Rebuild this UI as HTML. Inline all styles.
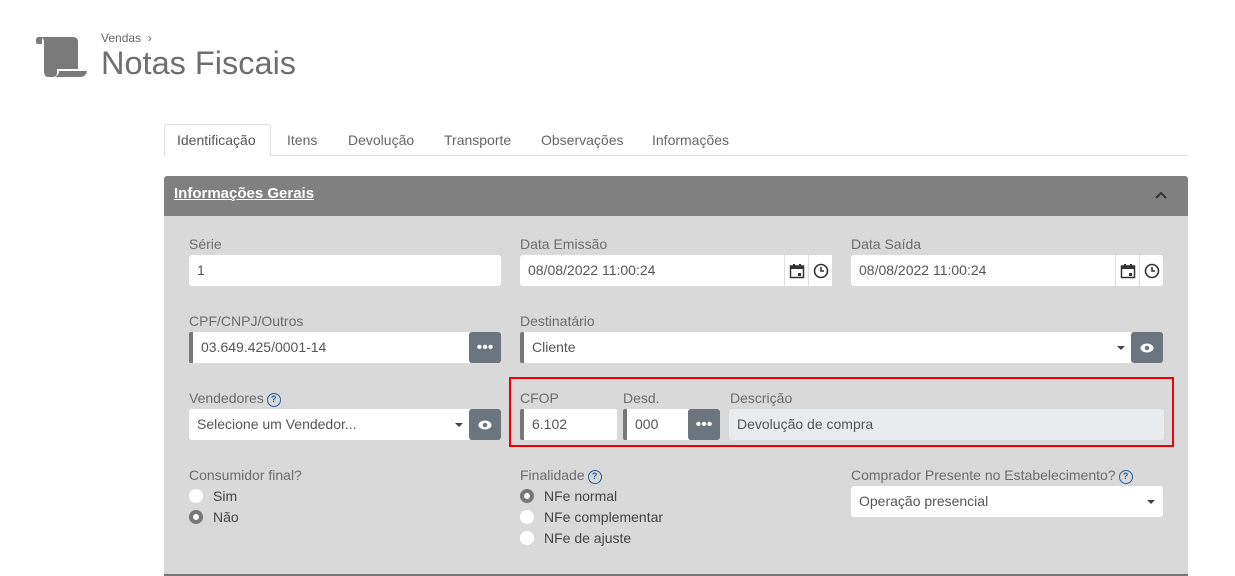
<!DOCTYPE html>
<html><head><meta charset="utf-8"><style>
*{box-sizing:border-box;margin:0;padding:0}
body{width:1235px;height:576px;background:#fff;font-family:"Liberation Sans",Arial,sans-serif;position:relative;overflow:hidden;color:#555}
.a{position:absolute}
.lbl{position:absolute;font-size:14px;color:#6c6c6c}
.inp{position:absolute;background:#fff;border-radius:3px;height:31px;font-size:14px;color:#555;line-height:31px;padding-left:8px}
.bl{border-left:4px solid #777;padding-left:8px;border-radius:2px}
.btn{position:absolute;background:#6c757d;border-radius:3px;width:32px;height:31px;color:#fff;display:flex;align-items:center;justify-content:center}
.ib{position:absolute;background:#fff;width:24px;height:31px;display:flex;align-items:center;justify-content:center;border-left:1px solid #ddd}
.caret{position:absolute;right:8px;top:14px;border-left:4px solid transparent;border-right:4px solid transparent;border-top:4px solid #444}
.r{position:absolute;width:14px;height:14px;border-radius:50%;background:#fff}
.r.on{background:#fff;border:4px solid #777}
.rt{position:absolute;font-size:14px;color:#444}
.q{display:inline-block;width:14px;height:14px;border:1.5px solid #2a5a9a;border-radius:50%;font-size:9px;line-height:11px;text-align:center;color:#2a5a9a;font-weight:bold;vertical-align:1px;margin-left:3px}
.tab{position:absolute;top:132px;font-size:14px;color:#666}
</style></head><body>
<svg class="a" style="left:35px;top:36px" width="54" height="42" viewBox="0 0 54 42"><path d="M1 4 Q1 1 4 1 H7 V8 H3 Q1 8 1 6 Z" fill="#7a7a7a"/><path d="M6 1 H38 Q43 1 43 6 V33 H22 V37 Q22 41 17 41 H14 Q9 41 9 36 V6 Q9 3 6 1 Z" fill="#7a7a7a"/><path d="M24 35 H52 Q51 41 45 41 H20 Q24 39 24 35 Z" fill="#7a7a7a"/></svg>
<div class="a" style="left:101px;top:31px;font-size:12px;color:#666">Vendas &nbsp;›</div>
<div class="a" style="left:101px;top:45px;font-size:32.5px;color:#6e6e6e">Notas Fiscais</div>

<div class="a" style="left:164px;top:155px;width:1024px;height:1px;background:#ddd"></div>
<div class="a" style="left:164px;top:124px;width:107px;height:32px;background:#fff;border:1px solid #ddd;border-bottom:none;border-radius:3px 3px 0 0"></div>
<div class="tab" style="left:177px;color:#555">Identificação</div>
<div class="tab" style="left:287px">Itens</div>
<div class="tab" style="left:348px">Devolução</div>
<div class="tab" style="left:444px">Transporte</div>
<div class="tab" style="left:541px">Observações</div>
<div class="tab" style="left:652px">Informações</div>

<div class="a" style="left:164px;top:176px;width:1024px;height:40px;background:#808080;border-radius:3px 3px 0 0"></div>
<div class="a" style="left:174px;top:185px;font-size:15px;font-weight:bold;color:#fff;text-decoration:underline">Informações Gerais</div>
<svg class="a" style="left:1154px;top:190px" width="14" height="10"><path d="M2 8 L7 3 L12 8" stroke="#333" stroke-width="2" fill="none"/></svg>
<div class="a" style="left:164px;top:216px;width:1024px;height:358px;background:#d9d9d9"></div>
<div class="a" style="left:164px;top:574px;width:1024px;height:2px;background:#777"></div>

<div class="lbl" style="left:189px;top:236px">Série</div>
<div class="inp" style="left:189px;top:255px;width:312px">1</div>
<div class="lbl" style="left:520px;top:236px">Data Emissão</div>
<div class="inp" style="left:520px;top:255px;width:312px">08/08/2022 11:00:24</div>
<div class="lbl" style="left:851px;top:236px">Data Saída</div>
<div class="inp" style="left:851px;top:255px;width:312px">08/08/2022 11:00:24</div>
<div class="ib" style="left:784px;top:255px"><svg width="16" height="16"><rect x="1.5" y="3" width="13" height="11.5" fill="none" stroke="#333" stroke-width="1.5"/><rect x="1.5" y="3" width="13" height="3" fill="#333"/><rect x="4" y="1" width="2" height="3" fill="#333"/><rect x="10" y="1" width="2" height="3" fill="#333"/><rect x="9" y="10" width="3" height="3" fill="#333"/></svg></div>
<div class="ib" style="left:808px;top:255px"><svg width="16" height="16"><circle cx="8" cy="8" r="6.5" fill="none" stroke="#333" stroke-width="1.6"/><path d="M8 4 V8 H11" stroke="#333" stroke-width="1.6" fill="none"/></svg></div>
<div class="ib" style="left:1115px;top:255px"><svg width="16" height="16"><rect x="1.5" y="3" width="13" height="11.5" fill="none" stroke="#333" stroke-width="1.5"/><rect x="1.5" y="3" width="13" height="3" fill="#333"/><rect x="4" y="1" width="2" height="3" fill="#333"/><rect x="10" y="1" width="2" height="3" fill="#333"/><rect x="9" y="10" width="3" height="3" fill="#333"/></svg></div>
<div class="ib" style="left:1139px;top:255px;border-radius:0 3px 3px 0"><svg width="16" height="16"><circle cx="8" cy="8" r="6.5" fill="none" stroke="#333" stroke-width="1.6"/><path d="M8 4 V8 H11" stroke="#333" stroke-width="1.6" fill="none"/></svg></div>

<div class="lbl" style="left:189px;top:313px">CPF/CNPJ/Outros</div>
<div class="inp bl" style="left:189px;top:332px;width:282px">03.649.425/0001-14</div>
<div class="btn" style="left:469px;top:332px">•••</div>
<div class="lbl" style="left:520px;top:313px">Destinatário</div>
<div class="inp bl" style="left:520px;top:332px;width:613px">Cliente<span class="caret"></span></div>
<div class="btn" style="left:1131px;top:332px"><svg width="14" height="10"><ellipse cx="7" cy="5" rx="6.5" ry="4.5" fill="#fff"/><circle cx="7" cy="5" r="2.3" fill="#6c757d"/></svg></div>

<div class="lbl" style="left:189px;top:390px">Vendedores<span class="q">?</span></div>
<div class="inp" style="left:189px;top:409px;width:282px">Selecione um Vendedor...<span class="caret"></span></div>
<div class="btn" style="left:469px;top:409px"><svg width="14" height="10"><ellipse cx="7" cy="5" rx="6.5" ry="4.5" fill="#fff"/><circle cx="7" cy="5" r="2.3" fill="#6c757d"/></svg></div>

<div class="a" style="left:509px;top:377px;width:665px;height:70px;border:2px solid #e00"></div>
<div class="lbl" style="left:520px;top:390px">CFOP</div>
<div class="inp bl" style="left:520px;top:409px;width:97px">6.102</div>
<div class="lbl" style="left:623px;top:390px">Desd.</div>
<div class="inp bl" style="left:623px;top:409px;width:68px">000</div>
<div class="btn" style="left:688px;top:409px">•••</div>
<div class="lbl" style="left:730px;top:390px">Descrição</div>
<div class="inp" style="left:729px;top:409px;width:435px;background:#e9ecef">Devolução de compra</div>

<div class="lbl" style="left:189px;top:467px">Consumidor final?</div>
<div class="r" style="left:189px;top:489px"></div><div class="rt" style="left:213px;top:488px">Sim</div>
<div class="r on" style="left:189px;top:510px"></div><div class="rt" style="left:213px;top:509px">Não</div>
<div class="lbl" style="left:520px;top:467px">Finalidade<span class="q">?</span></div>
<div class="r on" style="left:520px;top:489px"></div><div class="rt" style="left:544px;top:488px">NFe normal</div>
<div class="r" style="left:520px;top:510px"></div><div class="rt" style="left:544px;top:509px">NFe complementar</div>
<div class="r" style="left:520px;top:531px"></div><div class="rt" style="left:544px;top:530px">NFe de ajuste</div>
<div class="lbl" style="left:851px;top:467px">Comprador Presente no Estabelecimento?<span class="q">?</span></div>
<div class="inp" style="left:851px;top:486px;width:312px">Operação presencial<span class="caret"></span></div>
</body></html>
